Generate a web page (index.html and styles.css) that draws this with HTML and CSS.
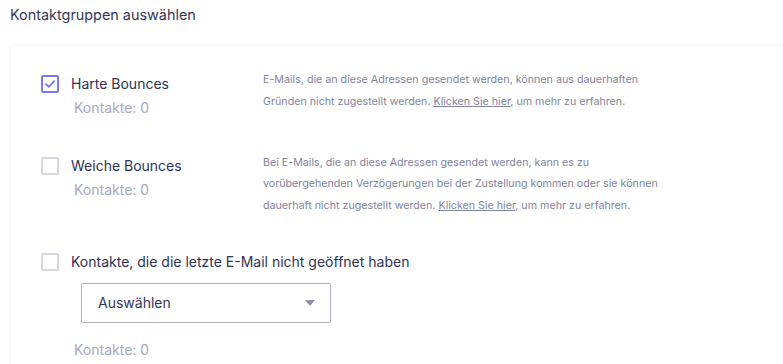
FILE: index.html
```html
<!DOCTYPE html>
<html lang="de">
<head>
    <meta charset="UTF-8">
    <meta name="viewport" content="width=device-width, initial-scale=1.0">
    <title>Kontaktgruppen auswählen</title>
    <link rel="stylesheet" href="styles.css">
</head>
<body>

    <h1 class="page-title">Kontaktgruppen auswählen</h1>

    <!-- Gruppen-Karte -->
    <div class="card">

        <div class="group-row">
            <div class="group-main">
                <label class="group-head">
                    <span class="check checked">
                        <svg viewBox="0 0 18 18" width="18" height="18"><path d="M3.6 9 L7.4 12.6 L14.4 5.2" fill="none" stroke="#6f74f2" stroke-width="2.2" stroke-linecap="round" stroke-linejoin="round"/></svg>
                    </span>
                    <span class="group-label">Harte Bounces</span>
                </label>
                <div class="group-count">Kontakte: 0</div>
            </div>
            <p class="group-desc">E-Mails, die an diese Adressen gesendet werden, können aus dauerhaften Gründen nicht zugestellt werden. <a href="#">Klicken Sie hier</a>, um mehr zu erfahren.</p>
        </div>

        <div class="group-row">
            <div class="group-main">
                <label class="group-head">
                    <span class="check"></span>
                    <span class="group-label">Weiche Bounces</span>
                </label>
                <div class="group-count">Kontakte: 0</div>
            </div>
            <p class="group-desc">Bei E-Mails, die an diese Adressen gesendet werden, kann es zu vorübergehenden Verzögerungen bei der Zustellung kommen oder sie können dauerhaft nicht zugestellt werden. <a href="#">Klicken Sie hier</a>, um mehr zu erfahren.</p>
        </div>

        <div class="group-row wide">
            <div class="group-main">
                <label class="group-head">
                    <span class="check"></span>
                    <span class="group-label">Kontakte, die die letzte E-Mail nicht geöffnet haben</span>
                </label>
                <div class="select-box">
                    <span>Auswählen</span>
                    <span class="select-arrow"></span>
                </div>
                <div class="group-count">Kontakte: 0</div>
            </div>
        </div>

    </div>

</body>
</html>
```

FILE: styles.css
```css
/* General styles */
body {
    font-family: Inter, "Noto Sans", Arial, sans-serif;
    margin: 0;
    padding: 0;
    background-color: #fff;
    color: #31345a;
    overflow: hidden;
}

.page-title {
    margin: 0;
    padding: 5px 0 0 10px;
    font-size: 14.4px;
    font-weight: 400;
    line-height: 20px;
    color: #33365a;
}

/* Card */
.card {
    margin: 21px 0 0 11px;
    width: 900px;
    padding: 23px 0 0 30px;
    background-color: #fff;
    box-shadow: 0 0 4px rgba(0, 0, 0, 0.07);
    min-height: 400px;
}

.group-row {
    display: grid;
    grid-template-columns: 222px 410px;
    margin-bottom: 34px;
}

.group-row.wide {
    display: block;
    margin-top: -3px;
}

.group-main {
    padding-top: 4.5px;
}

.group-head {
    display: flex;
    align-items: center;
    gap: 12px;
    height: 20px;
    cursor: pointer;
}

.check {
    box-sizing: border-box;
    width: 18px;
    height: 18px;
    border: 2px solid #d4d6e1;
    border-radius: 2px;
    background-color: #fff;
    display: flex;
    align-items: center;
    justify-content: center;
    flex-shrink: 0;
}

.check.checked {
    border-color: #7479f4;
}

.check svg {
    display: block;
    width: 14px;
    height: 14px;
}

.group-label {
    font-size: 14px;
    line-height: 20px;
    color: #2f3255;
}

.group-count {
    margin-top: 4px;
    padding-left: 33px;
    font-size: 14px;
    line-height: 20px;
    color: #a5a9bf;
}

.group-desc {
    margin: 0;
    font-size: 10.7px;
    line-height: 21.5px;
    color: #7f839e;
}

.group-desc a {
    color: #7f839e;
    text-decoration: underline;
}

/* Dropdown */
.select-box {
    box-sizing: border-box;
    width: 250px;
    height: 40px;
    margin: 11px 0 0 40px;
    padding: 0 15px 0 16px;
    border: 1px solid #aeb1c5;
    border-radius: 2px;
    display: flex;
    align-items: center;
    justify-content: space-between;
    font-size: 14px;
    color: #33365a;
}

.select-arrow {
    width: 0;
    height: 0;
    border-left: 5px solid transparent;
    border-right: 5px solid transparent;
    border-top: 6px solid #8d90a8;
}

.select-box + .group-count {
    margin-top: 17px;
}
```
